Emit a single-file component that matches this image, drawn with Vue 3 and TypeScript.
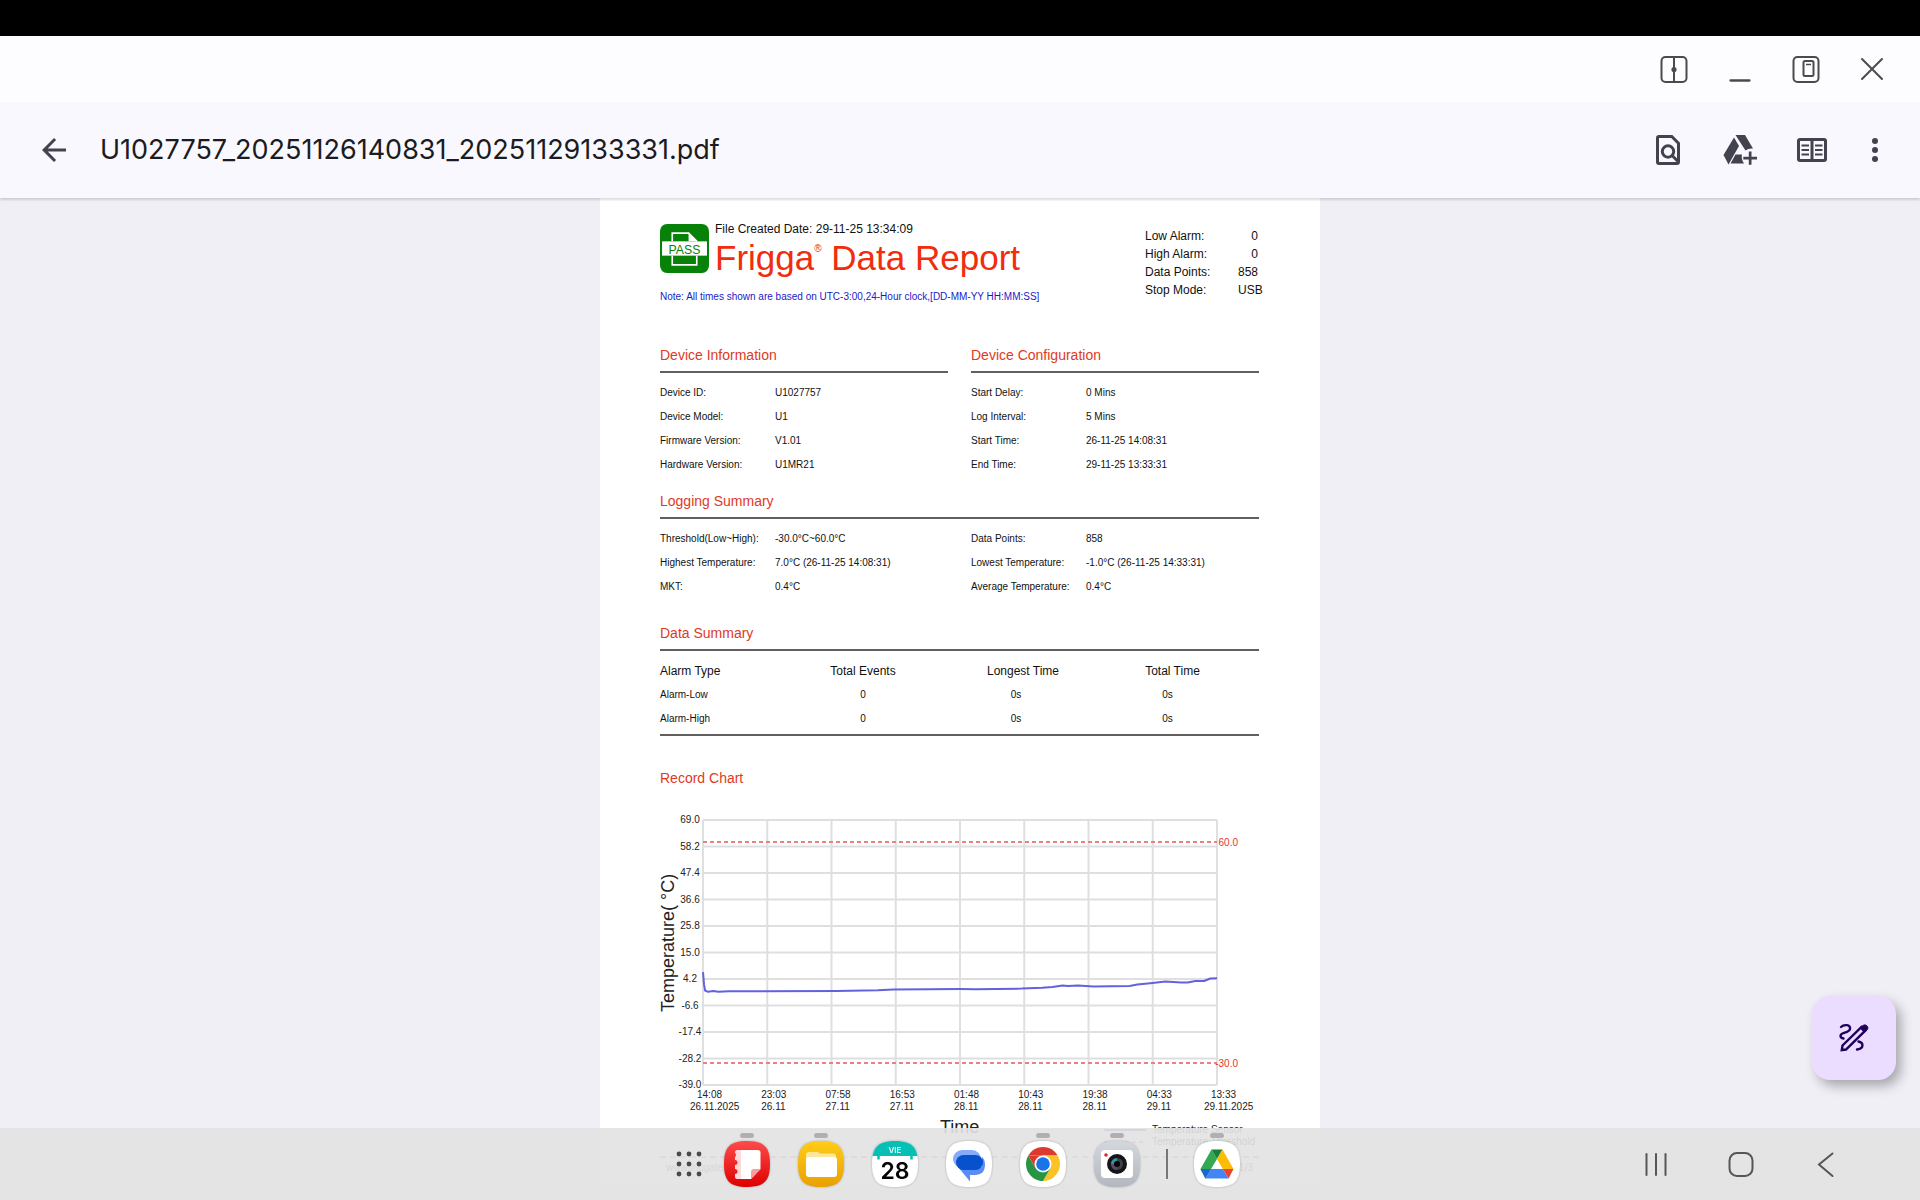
<script setup lang="ts">
interface Field {
  label: string
  value: string
}

const fileName = 'U1027757_20251126140831_20251129133331.pdf'

const totals: Field[] = [
  { label: 'Low Alarm:', value: '0' },
  { label: 'High Alarm:', value: '0' },
  { label: 'Data Points:', value: '858' },
  { label: 'Stop Mode:', value: 'USB' },
]

const deviceInfo: Field[] = [
  { label: 'Device ID:', value: 'U1027757' },
  { label: 'Device Model:', value: 'U1' },
  { label: 'Firmware Version:', value: 'V1.01' },
  { label: 'Hardware Version:', value: 'U1MR21' },
]

const deviceConfig: Field[] = [
  { label: 'Start Delay:', value: '0 Mins' },
  { label: 'Log Interval:', value: '5 Mins' },
  { label: 'Start Time:', value: '26-11-25 14:08:31' },
  { label: 'End Time:', value: '29-11-25 13:33:31' },
]

const loggingLeft: Field[] = [
  { label: 'Threshold(Low~High):', value: '-30.0°C~60.0°C' },
  { label: 'Highest Temperature:', value: '7.0°C (26-11-25 14:08:31)' },
  { label: 'MKT:', value: '0.4°C' },
]

const loggingRight: Field[] = [
  { label: 'Data Points:', value: '858' },
  { label: 'Lowest Temperature:', value: '-1.0°C (26-11-25 14:33:31)' },
  { label: 'Average Temperature:', value: '0.4°C' },
]

const alarms = [
  { type: 'Alarm-Low', events: '0', longest: '0s', total: '0s' },
  { type: 'Alarm-High', events: '0', longest: '0s', total: '0s' },
]

// Plot area of the record chart
const plot = { left: 43, top: 20, width: 514, height: 265 }
const maxTemp = 69
const tempRange = 108

const yOf = (temp: number): number => plot.top + ((maxTemp - temp) / tempRange) * plot.height
const xOf = (share: number): number => plot.left + share * plot.width

const yTicks = ['69.0', '58.2', '47.4', '36.6', '25.8', '15.0', '4.2', '-6.6', '-17.4', '-28.2', '-39.0']
const xTicks = [
  { time: '14:08', date: '26.11.2025' },
  { time: '23:03', date: '26.11' },
  { time: '07:58', date: '27.11' },
  { time: '16:53', date: '27.11' },
  { time: '01:48', date: '28.11' },
  { time: '10:43', date: '28.11' },
  { time: '19:38', date: '28.11' },
  { time: '04:33', date: '29.11' },
  { time: '13:33', date: '29.11.2025' },
]
const limits = ['60.0', '-30.0']

// [share of the recording time, temperature in °C]
const samples: [number, number][] = [
  [0, 7], [0.002, 2], [0.004, -0.5], [0.01, -1], [0.02, -0.7], [0.03, -1], [0.05, -0.8], [0.26, -0.7],
  [0.34, -0.4], [0.37, -0.1], [0.44, 0], [0.5, 0.1], [0.53, 0], [0.62, 0.3], [0.66, 0.6], [0.68, 0.9],
  [0.7, 1.5], [0.71, 1.3], [0.73, 1.5], [0.76, 1.2], [0.83, 1.4], [0.845, 1.9], [0.87, 2.5],
  [0.9, 3.2], [0.93, 2.8], [0.943, 2.8], [0.958, 3.4], [0.975, 3.4], [0.987, 4.4], [1, 4.5],
]
const trace = samples.map(([s, t]) => `${xOf(s).toFixed(1)},${yOf(t).toFixed(1)}`).join(' ')
</script>

<template>
  <div class="screen">
    <div class="status-bar"></div>

    <div class="window-bar">
      <button type="button" class="win-btn" aria-label="Split screen">
        <svg viewBox="0 0 32 32" fill="none" stroke="#4b4b4f" stroke-width="2">
          <rect x="3.500" y="4" width="25" height="25" rx="4" />
          <path d="M16 4v25" />
          <circle cx="16" cy="16.500" r="1.600" fill="#4b4b4f" />
        </svg>
      </button>
      <button type="button" class="win-btn" aria-label="Minimise">
        <svg viewBox="0 0 32 32" stroke="#4b4b4f" stroke-width="2.300" stroke-linecap="round"><path d="M6.500 27.500h19" /></svg>
      </button>
      <button type="button" class="win-btn" aria-label="Pop-up view">
        <svg viewBox="0 0 32 32" fill="none" stroke="#4b4b4f" stroke-width="2">
          <rect x="3.500" y="4" width="25" height="25" rx="4" />
          <rect x="13.500" y="8" width="10" height="15" rx="1.500" />
          <path d="M16 11.500h5" stroke-width="1.500" />
        </svg>
      </button>
      <button type="button" class="win-btn" aria-label="Close">
        <svg viewBox="0 0 32 32" stroke="#4b4b4f" stroke-width="2" stroke-linecap="round"><path d="M6 6l20 20M26 6L6 26" /></svg>
      </button>
    </div>

    <header class="app-bar">
      <button type="button" class="icon-btn" aria-label="Back">
        <svg viewBox="0 0 24 24" fill="#42434e"><path d="M20 11H7.830l5.590-5.590L12 4l-8 8 8 8 1.410-1.410L7.830 13H20v-2z" /></svg>
      </button>
      <h1 class="file-name">{{ fileName }}</h1>
      <div class="actions">
        <button type="button" class="icon-btn" aria-label="Find in file">
          <svg viewBox="0 0 24 24" fill="none" stroke="#42434e" stroke-width="2">
            <path d="M6 3h8.500L19 7.500V20a1 1 0 0 1-1 1H6a1 1 0 0 1-1-1V4a1 1 0 0 1 1-1z" />
            <circle cx="12" cy="13" r="3.800" />
            <path d="M14.700 15.700l4.500 4.500" />
          </svg>
        </button>
        <button type="button" class="icon-btn" aria-label="Add to Drive">
          <svg viewBox="0 0 36 36">
            <g fill="#42434e">
              <path d="M12 5.500L1.500 23l5 9.500L17 14z" />
              <path d="M13.500 3h9.500l8 13.500q-4.500-.5-7.500 2z" />
              <path d="M13.500 22.500h6.500q-1 5 2 9H8.500z" />
              <path d="M26.800 19.500h2.700v5.200h5.500v2.700h-5.500v5.300h-2.700v-5.300h-5.500v-2.700h5.500z" />
            </g>
          </svg>
        </button>
        <button type="button" class="icon-btn" aria-label="Reading mode">
          <svg viewBox="0 0 36 36" fill="none" stroke="#42434e">
            <rect x="4.500" y="7.500" width="27" height="21" rx="1.500" stroke-width="3" />
            <path d="M18 7v22" stroke-width="3" />
            <path d="M7.500 13.500h7.500M7.500 18h7.500M7.500 22.500h7.500M21 13.500h7.500M21 18h7.500M21 22.500h7.500" stroke-width="2.200" />
          </svg>
        </button>
        <button type="button" class="icon-btn narrow" aria-label="More options">
          <svg viewBox="0 0 18 36" fill="#42434e"><circle cx="9" cy="9" r="3" /><circle cx="9" cy="18" r="3" /><circle cx="9" cy="27" r="3" /></svg>
        </button>
      </div>
    </header>

    <main class="viewer">
      <article class="sheet">
        <div class="report-head">
          <div>
            <div class="brand">
              <svg class="pass" viewBox="0 0 48 48" role="img" aria-label="Pass">
                <rect width="48" height="48" rx="7" fill="#078107" />
                <path d="M12 17V9h16l8 8M36 31v9H12v-9" fill="none" stroke="#fff" stroke-width="1.600" />
                <path d="M28 8v9h9z" fill="#fff" />
                <rect x="2" y="17" width="44" height="14" fill="#fff" />
                <text x="24" y="29" text-anchor="middle" font-size="12" fill="#078107">PASS</text>
              </svg>
              <div>
                <p class="created">File Created Date: 29-11-25 13:34:09</p>
                <p class="title">Frigga<sup>®</sup> Data Report</p>
              </div>
            </div>
            <p class="note">Note: All times shown are based on UTC-3:00,24-Hour clock,[DD-MM-YY HH:MM:SS]</p>
          </div>
          <dl class="totals">
            <div v-for="item in totals" :key="item.label">
              <dt>{{ item.label }}</dt>
              <dd>{{ item.value }}</dd>
            </div>
          </dl>
        </div>

        <div class="columns device">
          <section>
            <h2 class="ruled">Device Information</h2>
            <dl class="fields">
              <div v-for="item in deviceInfo" :key="item.label"><dt>{{ item.label }}</dt><dd>{{ item.value }}</dd></div>
            </dl>
          </section>
          <section>
            <h2 class="ruled">Device Configuration</h2>
            <dl class="fields">
              <div v-for="item in deviceConfig" :key="item.label"><dt>{{ item.label }}</dt><dd>{{ item.value }}</dd></div>
            </dl>
          </section>
        </div>

        <section class="logging">
          <h2 class="ruled">Logging Summary</h2>
          <div class="columns">
            <dl class="fields">
              <div v-for="item in loggingLeft" :key="item.label"><dt>{{ item.label }}</dt><dd>{{ item.value }}</dd></div>
            </dl>
            <dl class="fields">
              <div v-for="item in loggingRight" :key="item.label"><dt>{{ item.label }}</dt><dd>{{ item.value }}</dd></div>
            </dl>
          </div>
        </section>

        <section class="summary">
          <h2 class="ruled">Data Summary</h2>
          <div class="table-wrap">
            <table>
              <colgroup><col class="c-type" /><col class="c-events" /><col class="c-longest" /><col /></colgroup>
              <thead>
                <tr><th scope="col">Alarm Type</th><th scope="col">Total Events</th><th scope="col">Longest Time</th><th scope="col">Total Time</th></tr>
              </thead>
              <tbody>
                <tr v-for="row in alarms" :key="row.type">
                  <td>{{ row.type }}</td><td>{{ row.events }}</td><td>{{ row.longest }}</td><td>{{ row.total }}</td>
                </tr>
              </tbody>
            </table>
          </div>
        </section>

        <section class="record">
          <h2>Record Chart</h2>
          <svg class="chart" width="599" height="346" role="img" aria-label="Temperature over time">
            <g stroke="#dfdfdf" stroke-width="2">
              <line v-for="(t, i) in yTicks" :key="'h' + t" :x1="plot.left" :x2="plot.left + plot.width" :y1="plot.top + i * plot.height / 10" :y2="plot.top + i * plot.height / 10" />
              <line v-for="(t, i) in xTicks" :key="'v' + t.time" :x1="xOf(i / 8)" :x2="xOf(i / 8)" :y1="plot.top" :y2="plot.top + plot.height" />
            </g>
            <g v-for="limit in limits" :key="limit">
              <line :x1="plot.left" :x2="plot.left + plot.width" :y1="yOf(Number(limit))" :y2="yOf(Number(limit))" stroke="#ec8080" stroke-width="2" stroke-dasharray="4 3" />
              <text x="578" :y="yOf(Number(limit)) + 4" text-anchor="end" fill="#e63232">{{ limit }}</text>
            </g>
            <polyline :points="trace" fill="none" stroke="#6262de" stroke-width="2" stroke-linejoin="round" />
            <text v-for="(t, i) in yTicks" :key="'y' + t" x="30" :y="plot.top + i * plot.height / 10 + 3" text-anchor="middle">{{ t }}</text>
            <g v-for="(t, i) in xTicks" :key="'x' + t.time">
              <text :x="xOf(i / 8) - 6" y="298">{{ t.time }}</text>
              <text :x="xOf(i / 8) - (t.date.length > 5 ? 13 : 6)" y="310">{{ t.date }}</text>
            </g>
            <text class="axis" transform="translate(14 212) rotate(-90)">Temperature( °C)</text>
            <text class="axis" x="280" y="333">Time</text>
            <line x1="444" x2="486" y1="330" y2="330" stroke="#5050d8" stroke-width="2" />
            <text x="492" y="333">Temperature Sensor</text>
            <line x1="444" x2="486" y1="342" y2="342" stroke="#e87575" stroke-width="2" stroke-dasharray="4 3" />
            <text x="492" y="345">Temperature Threshold</text>
          </svg>
        </section>

        <footer class="sheet-foot"><span>www.friggatech.com</span><span>1/3</span></footer>
      </article>

      <button type="button" class="fab" aria-label="Annotate">
        <svg viewBox="0 0 36 36" fill="none" stroke="#21005d" stroke-width="2.400" stroke-linecap="round">
          <path d="M5 7c3-3 10-2.500 9 2S4 12 4.500 16c.2 1.700 1.500 2.200 3 2.500" />
          <path d="M22.500 21.500c5 1 6 7-1.500 8" />
          <path d="M5.800 30l.7-4.500L25.500 7l3.700 3.700L10 29.500z" stroke-linecap="butt" />
          <path d="M24.500 8l2.500-2.500c2.500-2 6.500 1.500 4.200 4.300L28.500 12z" fill="#21005d" stroke-width="1" />
        </svg>
      </button>
    </main>

    <nav class="taskbar" aria-label="Taskbar">
      <div class="apps">
        <button type="button" class="all-apps" aria-label="All apps">
          <svg viewBox="0 0 24 24" fill="#4a4a4a">
            <template v-for="r in 3" :key="r"><circle v-for="c in 3" :key="c" :cx="c * 10 - 8" :cy="r * 10 - 8" r="2.400" /></template>
          </svg>
        </button>
        <button type="button" class="app open" aria-label="Notes">
          <svg viewBox="0 0 46 46">
            <defs><linearGradient id="g-notes" x2="0" y2="1"><stop stop-color="#ff4b4b" /><stop offset="1" stop-color="#dc0000" /></linearGradient></defs>
            <path fill="url(#g-notes)" d="M23 0C40 0 46 6 46 23S40 46 23 46 0 40 0 23 6 0 23 0z" />
            <path d="M17 9h17q2.500 0 2.500 2.500V28l-9.500 10H17z" fill="#fff" />
            <path d="M13 9h4v29h-4q-2 0-2-2v-3a2.500 2.500 0 0 0 0-5v-4a2.500 2.500 0 0 0 0-5v-3a2.500 2.500 0 0 0 0-4q0-3 2-3z" fill="#ffd9d9" />
            <path d="M27 38V31q0-3 3-3h6.500z" fill="#ff9a9a" />
          </svg>
        </button>
        <button type="button" class="app open" aria-label="My Files">
          <svg viewBox="0 0 46 46">
            <defs><linearGradient id="g-files" x2="0" y2="1"><stop stop-color="#ffcd17" /><stop offset="1" stop-color="#eaa000" /></linearGradient></defs>
            <path fill="url(#g-files)" d="M23 0C40 0 46 6 46 23S40 46 23 46 0 40 0 23 6 0 23 0z" />
            <path d="M8 20v-6q0-3 3-3h8q2 0 3 1.500h13q3 0 3 3V20z" fill="#ffe69a" />
            <rect x="8" y="16" width="31" height="20" rx="3" fill="#fff" />
          </svg>
        </button>
        <button type="button" class="app" aria-label="Calendar">
          <svg viewBox="0 0 46 46">
            <clipPath id="tile-clip"><path d="M23 0C40 0 46 6 46 23S40 46 23 46 0 40 0 23 6 0 23 0z" /></clipPath>
            <g clip-path="url(#tile-clip)"><rect width="46" height="46" fill="#fff" /><rect width="46" height="15" fill="#06c0b5" /></g>
            <path d="M6.500 14v4.500M39.500 14v4.500" stroke="#06c0b5" stroke-width="2.500" />
            <text x="23" y="12" text-anchor="middle" font-size="8" font-weight="600" fill="#e9fffd">VIE</text>
            <text x="23" y="38" text-anchor="middle" font-size="23" font-weight="600" fill="#050505">28</text>
          </svg>
        </button>
        <button type="button" class="app" aria-label="Messages">
          <svg viewBox="0 0 46 46">
            <path d="M23 0C40 0 46 6 46 23S40 46 23 46 0 40 0 23 6 0 23 0z" fill="#fff" />
            <rect x="7" y="9" width="28" height="18" rx="9" fill="#86abfb" />
            <path d="M12 26h24V16q3 2.500 3 7.500 0 10.500-10.500 10.500H24v6.500z" fill="#5a8cf8" />
            <rect x="10" y="14" width="27" height="15" rx="7.500" fill="#0652cc" />
          </svg>
        </button>
        <button type="button" class="app open" aria-label="Chrome">
          <svg viewBox="0 0 46 46">
            <path d="M23 0C40 0 46 6 46 23S40 46 23 46 0 40 0 23 6 0 23 0z" fill="#fff" />
            <path d="M8.300 14.500a17 17 0 0 1 29.400 0H23z" fill="#dc3a2c" />
            <path d="M37.700 14.500A17 17 0 0 1 23 40l7.400-12.700L23 14.500z" fill="#fcc228" />
            <path d="M23 40A17 17 0 0 1 8.300 14.500l7.300 12.800 14.800 0z" fill="#2a9445" />
            <path d="M8.300 14.500l7.300 12.800L23 14.500z" fill="#dc3a2c" />
            <circle cx="23" cy="23" r="8.500" fill="#fff" />
            <circle cx="23" cy="23" r="6.800" fill="#1a73e8" />
          </svg>
        </button>
        <button type="button" class="app open" aria-label="Camera">
          <svg viewBox="0 0 46 46">
            <defs><linearGradient id="g-cam" x2="0" y2="1"><stop stop-color="#d3d8df" /><stop offset="1" stop-color="#b3b8c0" /></linearGradient></defs>
            <path fill="url(#g-cam)" d="M23 0C40 0 46 6 46 23S40 46 23 46 0 40 0 23 6 0 23 0z" />
            <rect x="7" y="9" width="32" height="28" rx="4" fill="#fff" />
            <circle cx="12" cy="14" r="1.800" fill="#d92b2b" />
            <circle cx="23" cy="23" r="10" fill="#161616" />
            <circle cx="23" cy="23" r="6" fill="#3f4146" />
            <path d="M23 23v-6a6 6 0 0 0-6 6z" fill="#3d8fa5" />
            <path d="M23 23h-6a6 6 0 0 0 6 6z" fill="#5a4a6e" />
            <circle cx="23" cy="23" r="3" fill="#050505" />
          </svg>
        </button>
        <span class="divider"></span>
        <button type="button" class="app open" aria-label="Drive">
          <svg viewBox="0 0 46 46">
            <path d="M23 0C40 0 46 6 46 23S40 46 23 46 0 40 0 23 6 0 23 0z" fill="#fff" />
            <path d="M17.500 8.500L6.500 28l4.900 9.500L23 18z" fill="#34a853" />
            <path d="M17.500 8.500h11L23 18z" fill="#188038" />
            <path d="M28.500 8.500L39.500 28h-10.700L23 18z" fill="#fbbc04" />
            <path d="M6.500 28h10.700l-5.800 9.500z" fill="#1967d2" />
            <path d="M17.200 28h11.600l5.800 9.500H11.400z" fill="#4285f4" />
            <path d="M28.800 28h10.700l-4.900 9.500z" fill="#ea4335" />
          </svg>
        </button>
      </div>
      <div class="system">
        <button type="button" aria-label="Recent apps"><svg viewBox="0 0 48 48"><path d="M14.500 14v21M24 14v21M33.500 14v21" /></svg></button>
        <button type="button" aria-label="Home"><svg viewBox="0 0 48 48"><rect x="12.500" y="13" width="23" height="23" rx="7.500" /></svg></button>
        <button type="button" aria-label="Go back"><svg viewBox="0 0 48 48"><path d="M30.500 13.500L17 24.500 30.500 36" /></svg></button>
      </div>
    </nav>
  </div>
</template>

<style>
body {
  margin: 0;
}
</style>

<style scoped>
.screen {
  position: relative;
  display: flex;
  flex-direction: column;
  height: 100vh;
  overflow: hidden;
  background: #f0eff6;
  font-family: "Liberation Sans", Arial, sans-serif;
}

button {
  display: block;
  padding: 0;
  border: 0;
  background: none;
  cursor: pointer;
}

button svg {
  display: block;
  width: 100%;
  height: 100%;
}

h1, h2, p, dl, dd {
  margin: 0;
  font-weight: 400;
}

.status-bar {
  flex: none;
  height: 36px;
  background: #000;
}

.window-bar {
  flex: none;
  display: flex;
  align-items: center;
  justify-content: flex-end;
  gap: 34px;
  height: 66px;
  padding-right: 32px;
  background: #fdfdff;
}

.win-btn {
  width: 32px;
  height: 32px;
}

.app-bar {
  position: relative;
  z-index: 1;
  flex: none;
  display: flex;
  align-items: center;
  height: 96px;
  padding: 0 36px;
  gap: 28px;
  background: #f9f8ff;
  box-shadow: 0 2px 2px rgba(0, 0, 0, 0.14);
}

.file-name {
  flex: 1;
  color: #1b1b21;
  font-family: Inter, Roboto, sans-serif;
  font-size: 27px;
  line-height: 36px;
  white-space: nowrap;
}

.actions {
  display: flex;
  gap: 36px;
}

.icon-btn {
  width: 36px;
  height: 36px;
}

.narrow {
  width: 18px;
}

.viewer {
  flex: 1;
  min-height: 0;
  overflow: hidden;
}

.sheet {
  box-sizing: border-box;
  width: 720px;
  margin: 0 auto;
  padding: 22px 61px 8px 60px;
  background: #fff;
  color: #111;
}

.report-head {
  display: flex;
  justify-content: space-between;
}

.brand {
  display: flex;
  gap: 6px;
}

.pass {
  width: 49px;
  height: 49px;
  margin-top: 4px;
}

.created {
  font-size: 12px;
  line-height: 18px;
}

.title {
  height: 40px;
  color: #f02d0c;
  font-size: 35px;
  line-height: 40px;
  white-space: nowrap;
}

.title sup {
  font-size: 10px;
  line-height: 10px;
  vertical-align: 18px;
}

.totals {
  padding: 7px 1px 0 0;
  font-size: 12px;
  line-height: 18px;
}

.totals div {
  display: flex;
}

.totals dt {
  width: 93px;
}

.totals dd {
  width: 20px;
  text-align: right;
}

.note {
  margin-top: 13px;
  color: #1a1acb;
  font-size: 10px;
  line-height: 12px;
}

h2 {
  color: #e03a1e;
  font-size: 14px;
  line-height: 24px;
}

.ruled {
  padding-bottom: 4px;
  border-bottom: 2px solid #606060;
}

.columns {
  display: grid;
  grid-template-columns: 1fr 1fr;
  column-gap: 23px;
}

.device {
  margin-top: 40px;
}

.fields {
  padding-top: 8px;
  font-size: 10px;
  line-height: 24px;
}

.fields div {
  display: flex;
}

.fields dt {
  width: 115px;
}

.logging {
  margin-top: 12px;
}

.summary {
  margin-top: 22px;
}

.table-wrap {
  padding: 8px 0 3px;
  border-bottom: 2px solid #606060;
}

table {
  width: 100%;
  table-layout: fixed;
  border-collapse: collapse;
  font-size: 10px;
  line-height: 24px;
  text-align: center;
}

.c-type {
  width: 124px;
}

.c-events {
  width: 158px;
}

.c-longest {
  width: 162px;
}

th {
  padding: 0;
  font-size: 12px;
  font-weight: 400;
}

td {
  padding: 0;
}

th:first-child,
td:first-child {
  text-align: left;
}

td:nth-child(3) {
  padding-right: 14px;
}

th:last-child {
  padding-right: 18px;
}

td:last-child {
  padding-right: 28px;
}

.record {
  margin-top: 30px;
}

.chart {
  display: block;
  margin-top: 10px;
  overflow: visible;
  fill: #222;
  font-size: 10px;
}

.axis {
  font-size: 18px;
}

.sheet-foot {
  display: flex;
  justify-content: space-between;
  margin-top: 10px;
  padding: 2px 6px 0;
  border-top: 2px dashed #999;
  color: #555;
  font-size: 10px;
  line-height: 16px;
}

.fab {
  position: absolute;
  right: 24px;
  bottom: 120px;
  width: 84px;
  height: 84px;
  padding: 24px;
  border-radius: 18px;
  background: #eaddff;
  box-shadow: 5px 6px 12px rgba(0, 0, 0, 0.3);
}

.taskbar {
  position: absolute;
  z-index: 2;
  right: 0;
  bottom: 0;
  left: 0;
  display: grid;
  grid-template-columns: 1fr auto 1fr;
  align-items: center;
  height: 72px;
  background: rgba(226, 226, 226, 0.91);
}

.apps {
  grid-column: 2;
  display: flex;
  align-items: center;
  gap: 18px;
  padding-left: 2px;
}

.all-apps {
  width: 24px;
  height: 24px;
}

.all-apps svg {
  overflow: visible;
}

.app {
  position: relative;
  width: 46px;
  height: 46px;
  margin: 0 5px;
}

.app svg {
  font-family: Inter, Roboto, sans-serif;
  filter: drop-shadow(0 0 1px rgba(0, 0, 0, 0.25));
}

.open::before {
  position: absolute;
  top: -8px;
  left: 16px;
  width: 14px;
  height: 5px;
  border-radius: 3px;
  background: #b0b0b0;
  content: "";
}

.divider {
  width: 2px;
  height: 30px;
  margin: 0 3px;
  background: #777;
}

.system {
  grid-column: 3;
  justify-self: end;
  display: flex;
  gap: 37px;
  padding-right: 70px;
}

.system button {
  width: 48px;
  height: 48px;
}

.system svg {
  fill: none;
  stroke: #565656;
  stroke-width: 2;
  stroke-linecap: round;
}
</style>
